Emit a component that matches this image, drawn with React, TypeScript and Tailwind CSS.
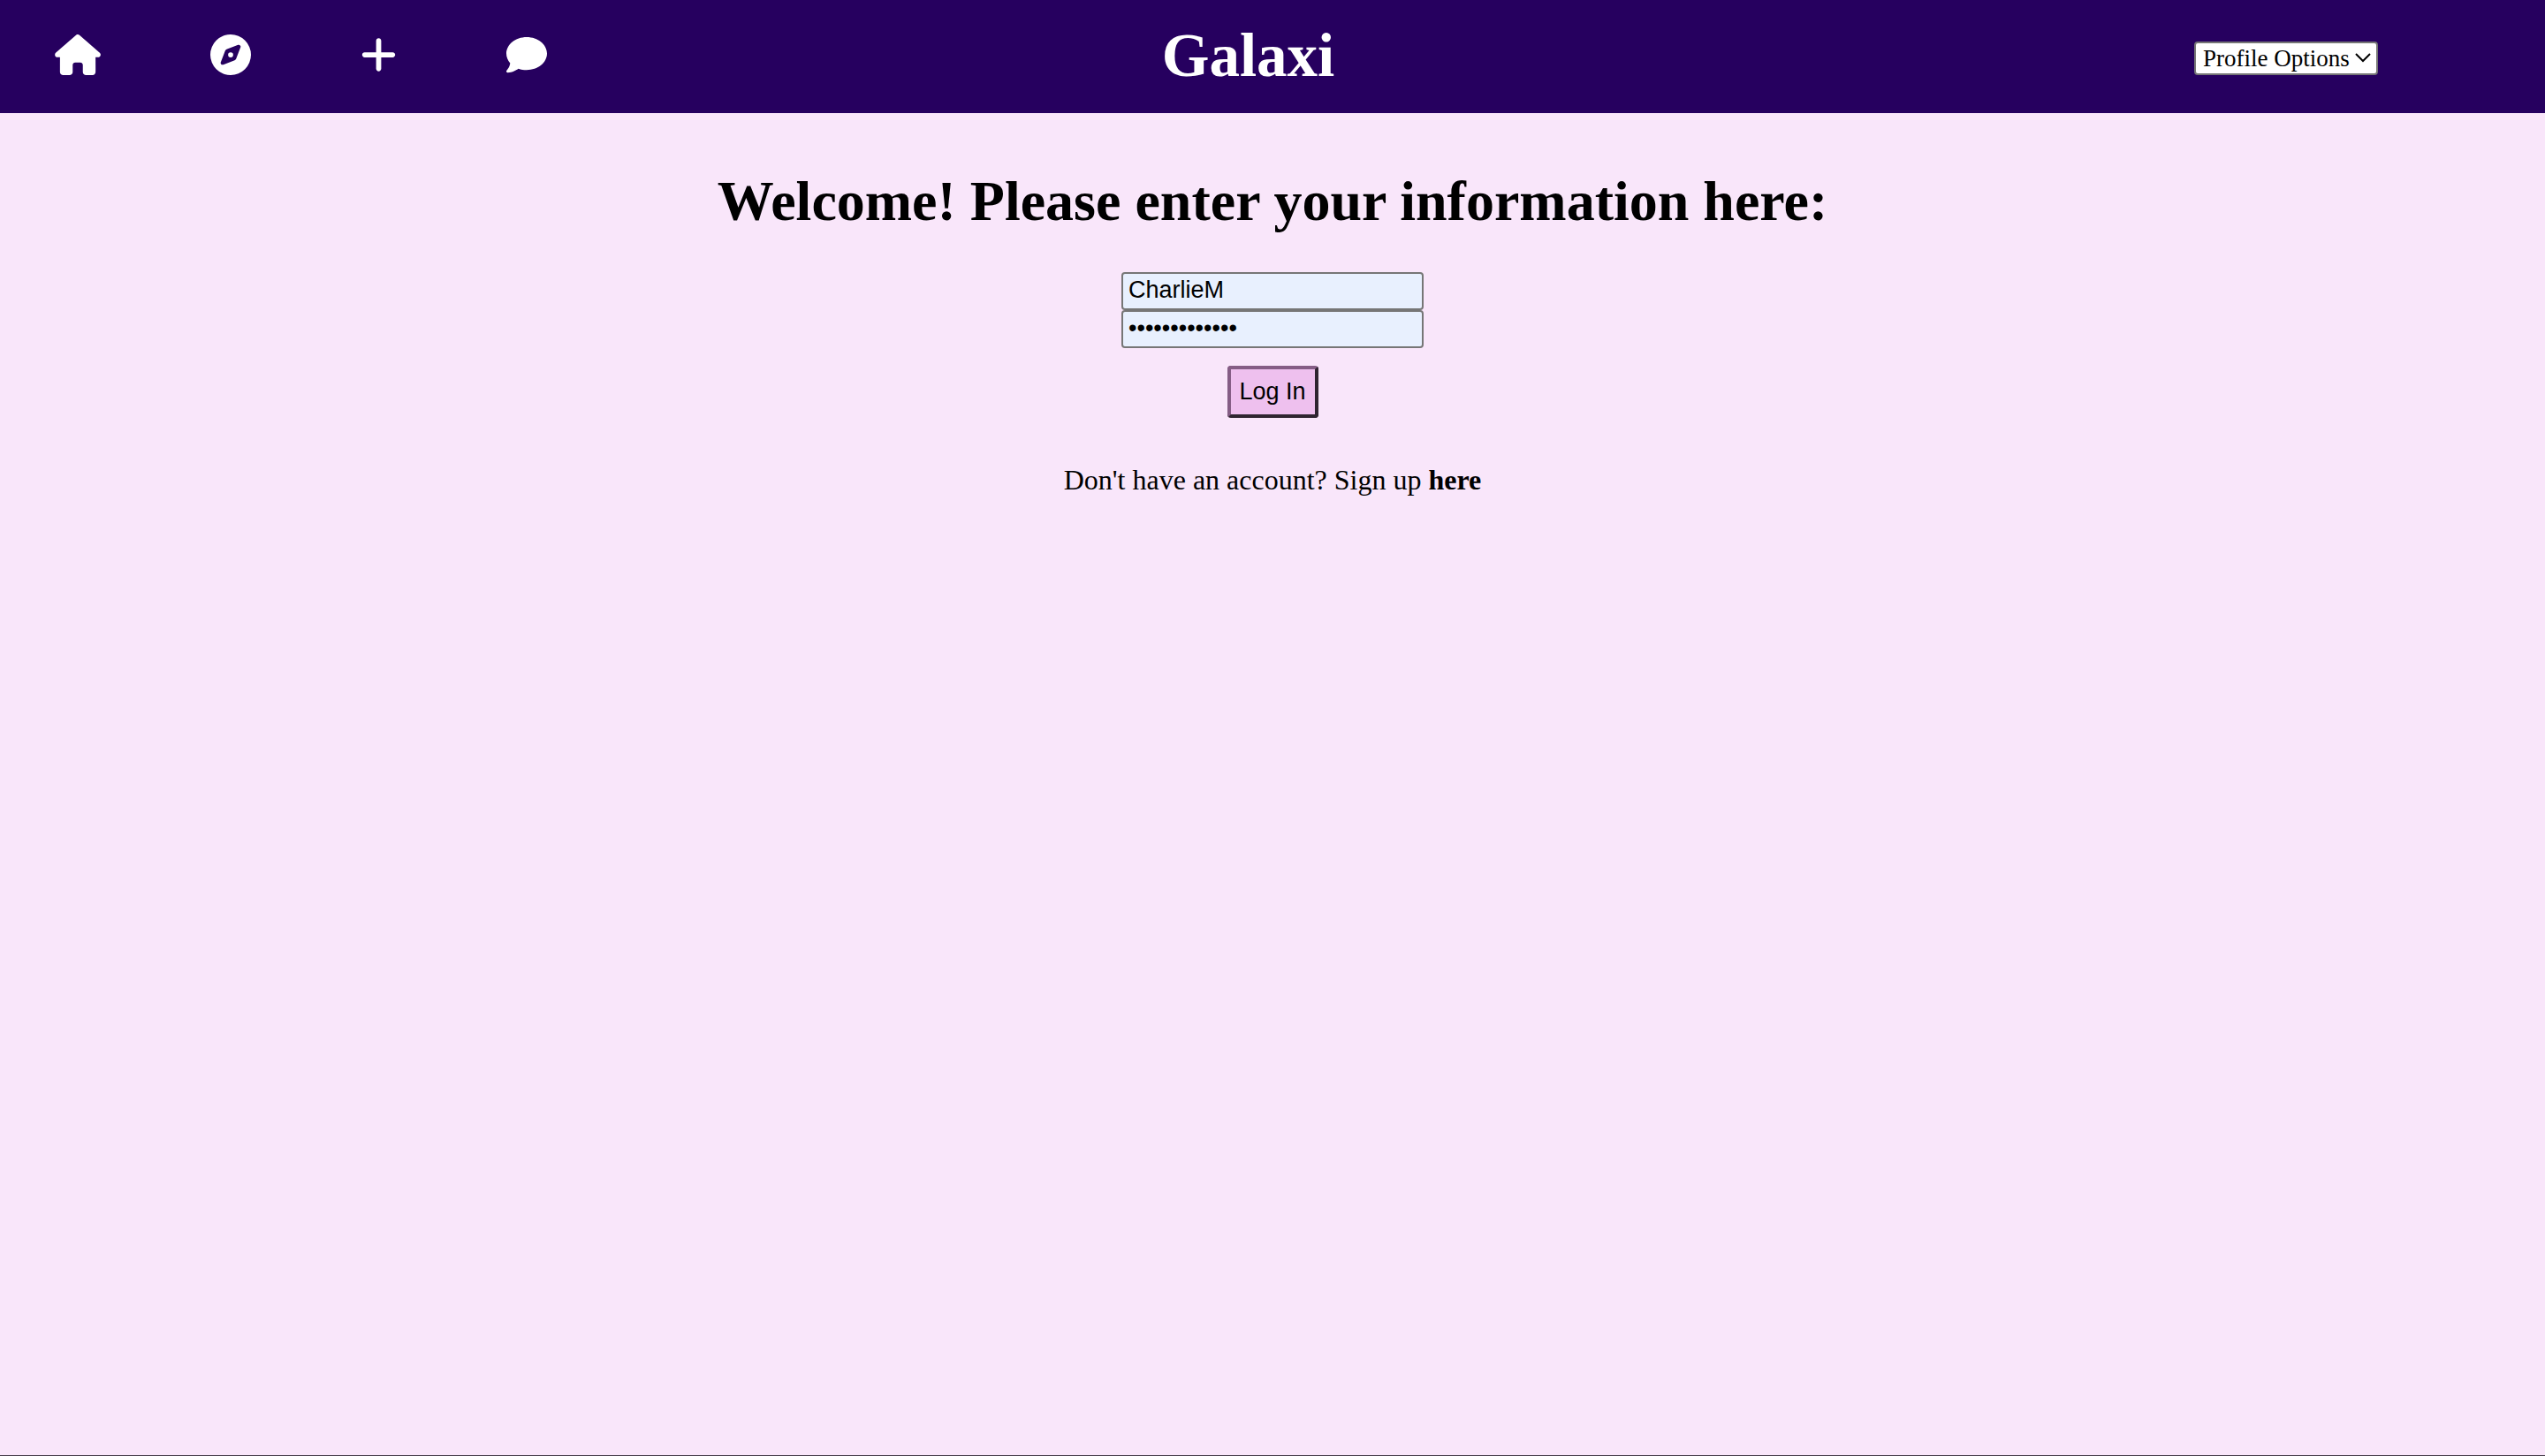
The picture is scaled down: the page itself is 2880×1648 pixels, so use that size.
import { FaComment, FaCompass, FaHouse, FaPlus } from "react-icons/fa6";

const links = [
  { label: "Home", href: "#home", Icon: FaHouse, width: "w-[52px]" },
  { label: "Explore", href: "#explore", Icon: FaCompass, width: "w-[46px]" },
  { label: "Create post", href: "#create", Icon: FaPlus, width: "w-[41px]" },
  { label: "Messages", href: "#messages", Icon: FaComment, width: "w-[46px]" },
];

function ProfileSelect() {
  return (
    <div className="relative">
      <select
        aria-label="Profile Options"
        className="block h-[38px] w-[208px] appearance-none rounded-[4px] border-2 border-[#767676] bg-white pl-2 text-[27px] leading-8 text-black"
      >
        <option>Profile Options</option>
        <option>Log In</option>
        <option>Sign Up</option>
      </select>
      <svg
        className="pointer-events-none absolute top-3 right-2 h-3 w-[18px]"
        viewBox="0 0 18 12"
        fill="none"
        stroke="black"
        strokeWidth="2"
        aria-hidden="true"
      >
        <path d="M1 2l8 8 8-8" />
      </svg>
    </div>
  );
}

function Header() {
  return (
    <header className="grid h-32 grid-cols-[1fr_auto_1fr] items-center bg-[#26005f] pr-[117px] pl-[62px] text-white">
      <nav className="flex items-center gap-[124px] pb-1">
        {links.map(({ label, href, Icon, width }) => (
          <a key={label} href={href} aria-label={label} className="shrink-0">
            <Icon className={`h-[46px] ${width}`} />
          </a>
        ))}
      </nav>
      <h1 className="pb-0.5 text-[69px] leading-[80px] font-bold">Galaxi</h1>
      <div className="flex justify-end pt-1 pr-[72px]">
        <ProfileSelect />
      </div>
    </header>
  );
}

function LoginForm() {
  const field =
    "h-[43px] w-[342px] rounded-[4px] border-2 border-[#767676] bg-[#e8f0fe] px-1.5 pb-0.5 font-['Liberation_Sans',Arial,sans-serif] text-[27px] text-black";
  return (
    <form className="mt-[42px] flex flex-col items-center" onSubmit={(e) => e.preventDefault()}>
      <input aria-label="Username" type="text" defaultValue="CharlieM" className={field} />
      <input aria-label="Password" type="password" defaultValue="galaxi-login1" className={field} />
      <button
        type="submit"
        className="mt-5 h-[59px] w-[103px] rounded-[4px] border-4 border-t-[#855d85] border-r-[#2f2430] border-b-[#2f2430] border-l-[#855d85] bg-[#eec0ee] font-['Liberation_Sans',Arial,sans-serif] text-[27px] whitespace-nowrap text-black"
      >
        Log In
      </button>
    </form>
  );
}

export default function App() {
  return (
    <div className="flex min-h-screen flex-col border-b border-[#443c48] bg-[#f9e6fa] font-['Liberation_Serif','Times_New_Roman',serif] text-black">
      <Header />
      <main className="flex flex-col items-center pt-[62px] text-center">
        <h2 className="text-[64px] leading-[76px] font-bold">
          Welcome! Please enter your information here:
        </h2>
        <LoginForm />
        <p className="mt-[52px] text-[32px] leading-9">
          Don't have an account? Sign up{" "}
          <a href="#signup" className="font-bold">
            here
          </a>
        </p>
      </main>
    </div>
  );
}
